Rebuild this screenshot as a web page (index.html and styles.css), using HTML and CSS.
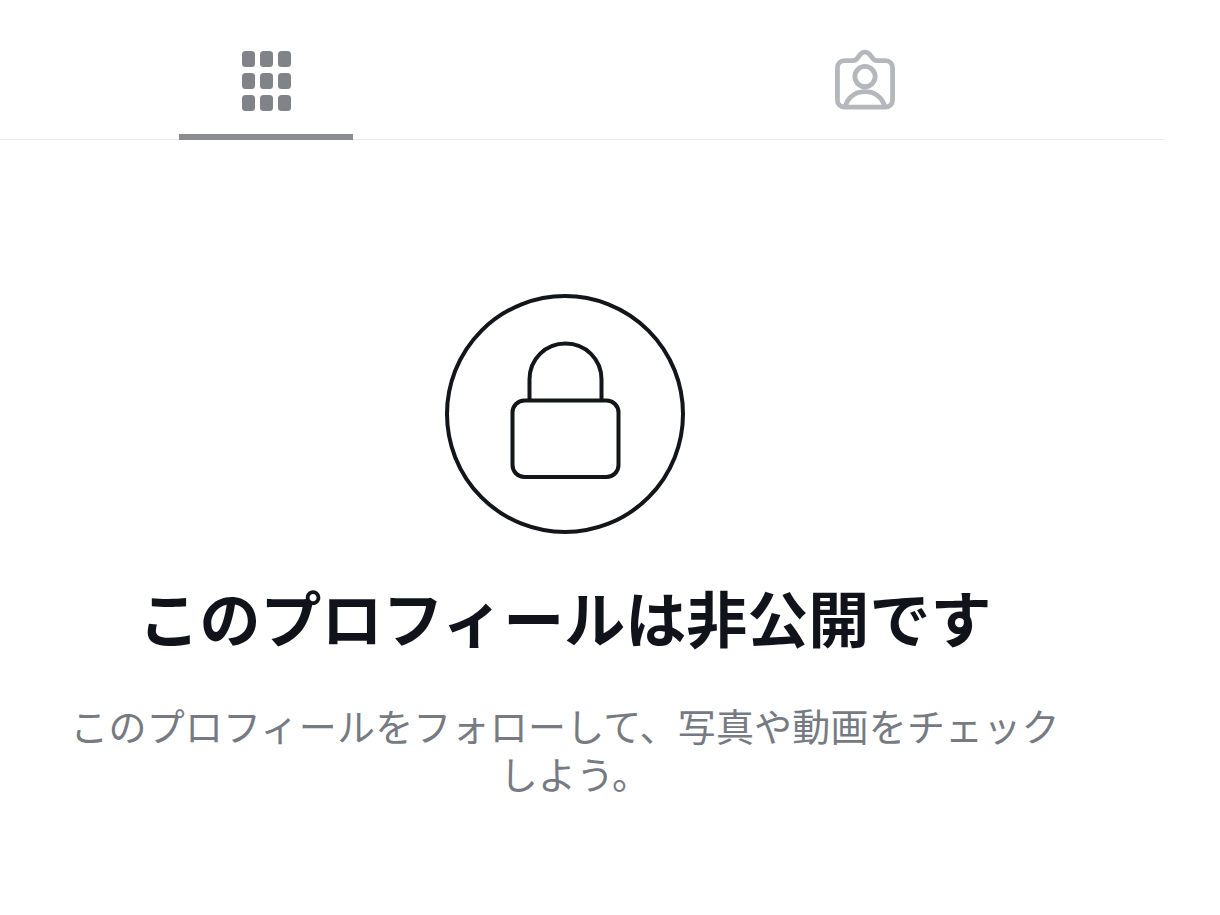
FILE: index.html
```html
<!DOCTYPE html>
<html lang="ja">
<head>
    <meta charset="UTF-8">
    <meta name="viewport" content="width=device-width, initial-scale=1.0">
    <title>このプロフィールは非公開です</title>
    <link rel="stylesheet" href="styles.css">
</head>
<body>
    <div class="tabs">
        <div class="tab tab-posts">
            <div class="grid-icon">
                <span></span><span></span><span></span>
                <span></span><span></span><span></span>
                <span></span><span></span><span></span>
            </div>
            <div class="tab-underline"></div>
        </div>
        <div class="tab tab-tagged">
            <svg class="tagged-icon" width="60" height="62" viewBox="0 0 62 63" fill="none" stroke="#b4b7bb" stroke-width="5" stroke-linejoin="round">
                <path d="M10 11.5H18.5C20.2 11.5 21.5 10.8 22.6 9.6L26.3 5C28.8 2 33.2 2 35.7 5L39.4 9.6C40.5 10.8 41.8 11.5 43.5 11.5H52C56.5 11.5 59.5 14.5 59.5 19V52C59.5 56.5 56.5 59.5 52 59.5H10C5.5 59.5 2.5 56.5 2.5 52V19C2.5 14.5 5.5 11.5 10 11.5Z"/>
                <circle cx="31" cy="28" r="10.5"/>
                <path d="M11 58C13.5 49 21.5 43.5 31 43.5C40.5 43.5 48.5 49 51 58"/>
            </svg>
        </div>
    </div>

    <div class="private">
        <svg class="lock-icon" width="240" height="240" viewBox="0 0 240 240" fill="none" stroke="#12151a" stroke-width="4">
            <circle cx="120" cy="120" r="118"/>
            <path d="M84.5 106V85.5C84.5 65 100.5 49.5 120.5 49.5C140.5 49.5 156.5 65 156.5 85.5V106"/>
            <rect x="67.5" y="106.5" width="106" height="76.5" rx="12"/>
        </svg>
        <h1 class="private-title">このプロフィールは非公開です</h1>
        <p class="private-text">このプロフィールをフォローして、写真や動画をチェック<span class="private-text-end">しよう。</span></p>
    </div>
</body>
</html>
```

FILE: styles.css
```css
body {
    font-family: "Noto Sans CJK JP", "Noto Sans", sans-serif;
    background-color: #fff;
    margin: 0;
}
.tabs {
    display: flex;
    width: 1164px;
    height: 140px;
    box-sizing: border-box;
    border-bottom: 1px solid #e9eaeb;
}
.tab {
    display: flex;
    flex-direction: column;
    align-items: center;
    padding-top: 49px;
    box-sizing: border-box;
}
.tab-posts {
    width: 532px;
    padding-top: 51px;
}
.tab-tagged {
    width: 598px;
    margin-left: 34px;
}
.grid-icon {
    display: grid;
    grid-template-columns: repeat(3, 13px);
    grid-auto-rows: 16px;
    gap: 6px 5px;
}
.grid-icon span {
    background-color: #808387;
    border-radius: 3.5px;
}
.tab-underline {
    flex: none;
    width: 174px;
    height: 6px;
    margin-top: 23px;
    background-color: #8a8c90;
}
.private {
    display: flex;
    flex-direction: column;
    align-items: center;
    width: 1010px;
    margin-left: 60px;
    padding-top: 154px;
}
.lock-icon {
    display: block;
}
.private-title {
    margin: 41px 0 0;
    font-size: 61px;
    line-height: 84px;
    font-weight: 700;
    color: #10141a;
    white-space: nowrap;
}
.private-text {
    margin: 42px 0 0;
    font-size: 38px;
    letter-spacing: 0.2px;
    line-height: 48px;
    color: #767b83;
    text-align: center;
}
.private-text-end {
    padding-left: 20px;
}
```
